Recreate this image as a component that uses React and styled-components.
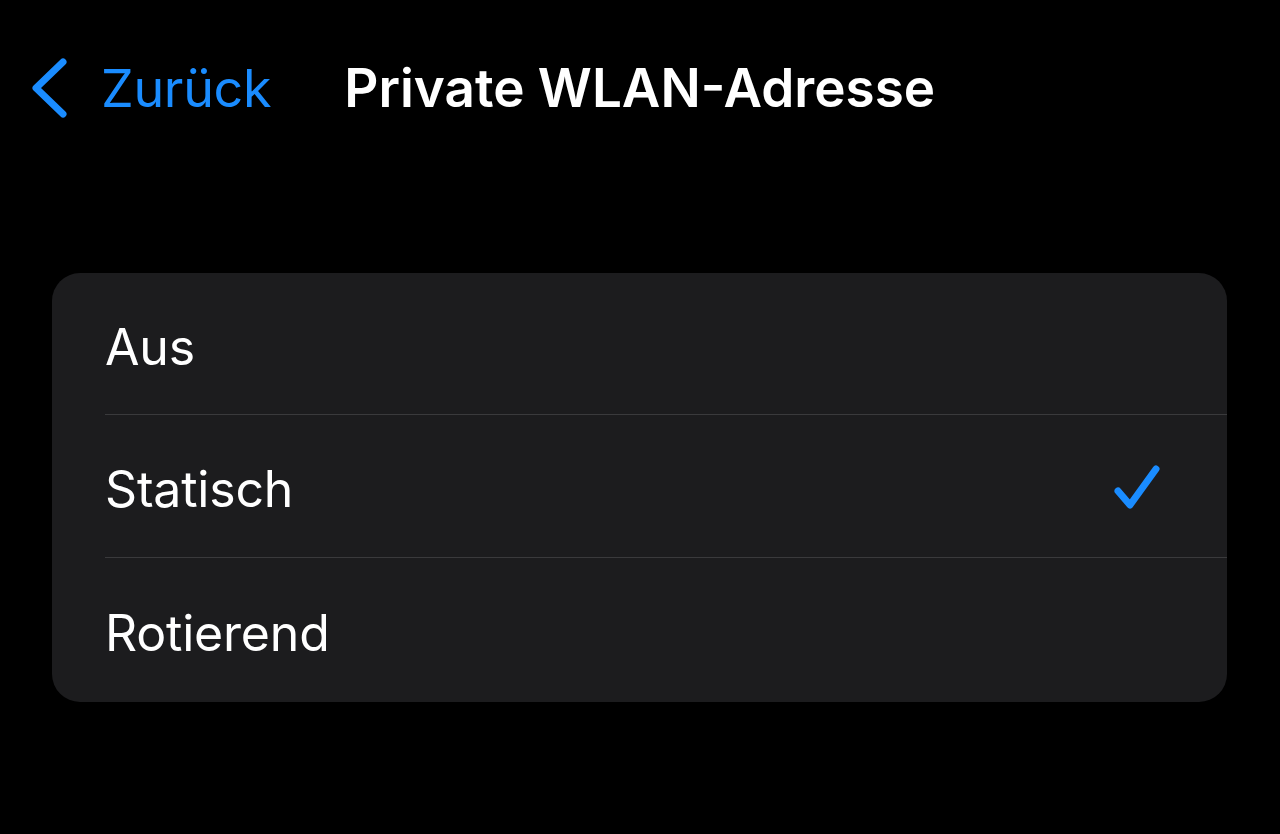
import styled, { createGlobalStyle } from 'styled-components';

const Global = createGlobalStyle`
  html, body {
    margin: 0;
    padding: 0;
    background: #000;
  }
  body {
    font-family: Inter, "Noto Sans", "Liberation Sans", sans-serif;
    -webkit-font-smoothing: antialiased;
  }
`;

const Screen = styled.div`
  width: 1280px;
  height: 834px;
  background: #000;
  overflow: hidden;
`;

const NavBar = styled.div`
  display: flex;
  align-items: center;
  height: 176px;
  padding-left: 30px;
  box-sizing: border-box;
`;

const BackButton = styled.button`
  display: flex;
  align-items: center;
  gap: 33px;
  background: none;
  border: 0;
  padding: 0;
  color: #1a8cff;
  font-family: inherit;
  font-size: 52px;
  letter-spacing: -0.3px;
  cursor: pointer;
`;

const Title = styled.h1`
  margin: 0 0 0 73px;
  color: #fff;
  font-size: 53px;
  font-weight: 600;
  letter-spacing: 0;
`;

const Card = styled.div`
  margin: 97px 53px 0 52px;
  background: #1c1c1e;
  border-radius: 28px;
  overflow: hidden;
`;

const Row = styled.div`
  padding-left: 53px;
`;

const RowInner = styled.div`
  display: flex;
  align-items: center;
  justify-content: space-between;
  height: ${(p) => p.$height}px;
  padding-right: 67px;
  box-sizing: border-box;
  border-bottom: ${(p) => (p.$last ? 'none' : '1px solid #3a3a3c')};
`;

const Label = styled.span`
  padding-top: 6px;
  color: #fff;
  font-size: 50px;
  letter-spacing: -0.2px;
`;

const CheckWrap = styled.span`
  display: flex;
  padding-top: 4px;
`;

function Chevron() {
  return (
    <svg width="38" height="60" viewBox="0 0 38 60" fill="none">
      <path d="M33 4 L6 30 L33 56" stroke="#1a8cff" strokeWidth="7" strokeLinecap="round" strokeLinejoin="round" />
    </svg>
  );
}

function Check() {
  return (
    <CheckWrap>
      <svg width="48" height="46" viewBox="0 0 48 46" fill="none">
        <path d="M6 26 L18 40 L44 4" stroke="#1a8cff" strokeWidth="7" strokeLinecap="round" strokeLinejoin="round" />
      </svg>
    </CheckWrap>
  );
}

const options = [
  { label: 'Aus', height: 142 },
  { label: 'Statisch', height: 143, checked: true },
  { label: 'Rotierend', height: 144 },
];

export default function App() {
  return (
    <Screen>
      <Global />
      <NavBar>
        <BackButton>
          <Chevron />
          Zurück
        </BackButton>
        <Title>Private WLAN-Adresse</Title>
      </NavBar>
      <Card>
        {options.map((o, i) => (
          <Row key={o.label}>
            <RowInner $height={o.height} $last={i === options.length - 1}>
              <Label>{o.label}</Label>
              {o.checked && <Check />}
            </RowInner>
          </Row>
        ))}
      </Card>
    </Screen>
  );
}
